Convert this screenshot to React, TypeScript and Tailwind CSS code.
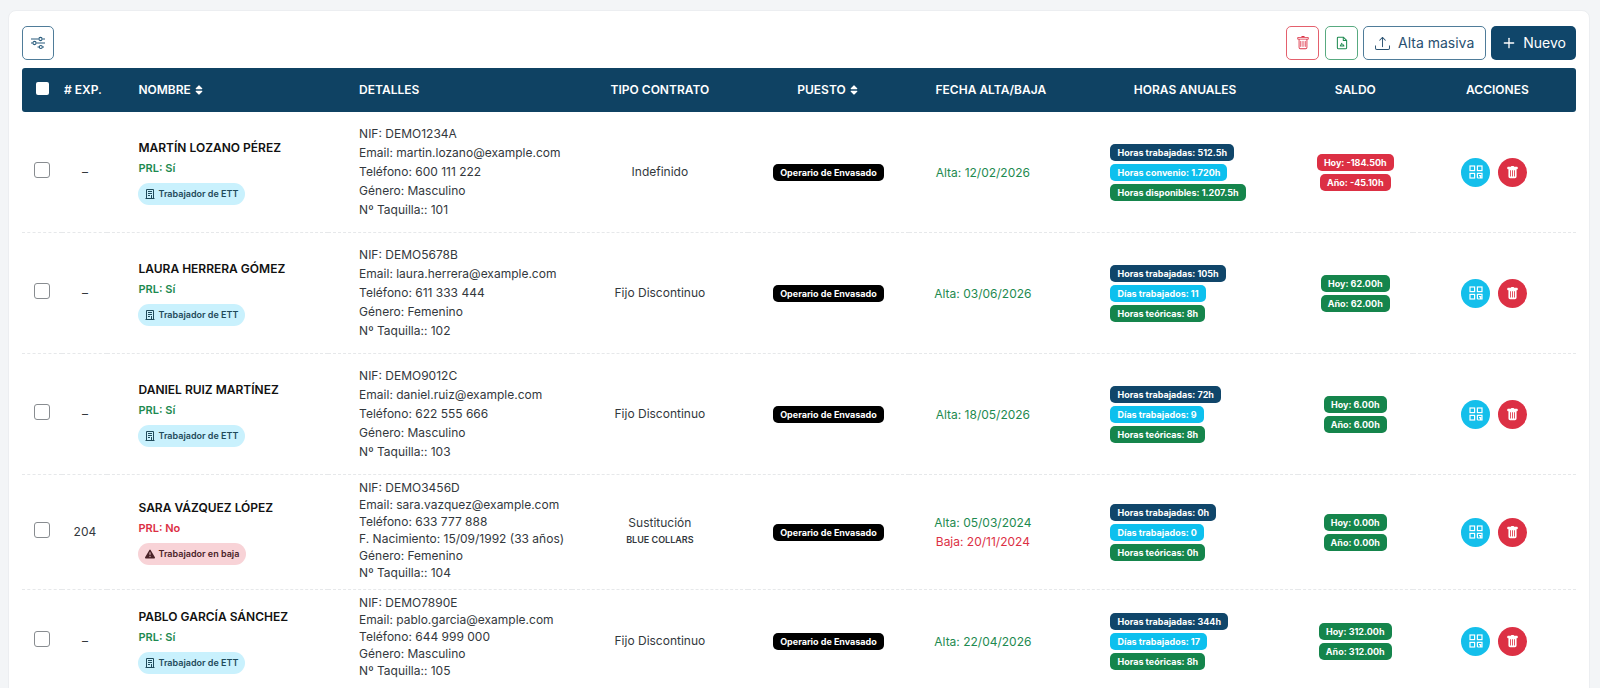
import { Plus } from 'lucide-react';
import { BsExclamationTriangleFill, BsTrash, BsTrashFill, BsUpload } from 'react-icons/bs';
import { FaSort } from 'react-icons/fa';

type Tone = 'navy' | 'cyan' | 'green' | 'red' | 'black';

interface Worker {
  exp: string;
  name: string;
  prl: boolean;
  status: 'ett' | 'baja';
  details: string[];
  contract: string;
  group?: string;
  alta: string;
  baja?: string;
  hours: string[];
  balance: string[];
  balanceTone: Tone;
  lineClass: string;
}

const tones: Record<Tone, string> = {
  navy: 'bg-[#10466a]',
  cyan: 'bg-[#0dc0ee]',
  green: 'bg-[#15854c]',
  red: 'bg-[#dc3044]',
  black: 'bg-black',
};

const hourTones: Tone[] = ['navy', 'cyan', 'green'];

const roomy = 'leading-[19px] pt-3 pb-[13px]';

const workers: Worker[] = [
  {
    exp: '–',
    name: 'MARTÍN LOZANO PÉREZ',
    prl: true,
    status: 'ett',
    details: ['NIF: DEMO1234A', 'Email: martin.lozano@example.com', 'Teléfono: 600 111 222', 'Género: Masculino', 'Nº Taquilla:: 101'],
    contract: 'Indefinido',
    alta: '12/02/2026',
    hours: ['Horas trabajadas: 512.5h', 'Horas convenio: 1.720h', 'Horas disponibles: 1.207.5h'],
    balance: ['Hoy: -184.50h', 'Año: -45.10h'],
    balanceTone: 'red',
    lineClass: roomy,
  },
  {
    exp: '–',
    name: 'LAURA HERRERA GÓMEZ',
    prl: true,
    status: 'ett',
    details: ['NIF: DEMO5678B', 'Email: laura.herrera@example.com', 'Teléfono: 611 333 444', 'Género: Femenino', 'Nº Taquilla:: 102'],
    contract: 'Fijo Discontinuo',
    alta: '03/06/2026',
    hours: ['Horas trabajadas: 105h', 'Días trabajados: 11', 'Horas teóricas: 8h'],
    balance: ['Hoy: 62.00h', 'Año: 62.00h'],
    balanceTone: 'green',
    lineClass: roomy,
  },
  {
    exp: '–',
    name: 'DANIEL RUIZ MARTÍNEZ',
    prl: true,
    status: 'ett',
    details: ['NIF: DEMO9012C', 'Email: daniel.ruiz@example.com', 'Teléfono: 622 555 666', 'Género: Masculino', 'Nº Taquilla:: 103'],
    contract: 'Fijo Discontinuo',
    alta: '18/05/2026',
    hours: ['Horas trabajadas: 72h', 'Días trabajados: 9', 'Horas teóricas: 8h'],
    balance: ['Hoy: 6.00h', 'Año: 6.00h'],
    balanceTone: 'green',
    lineClass: roomy,
  },
  {
    exp: '204',
    name: 'SARA VÁZQUEZ LÓPEZ',
    prl: false,
    status: 'baja',
    details: ['NIF: DEMO3456D', 'Email: sara.vazquez@example.com', 'Teléfono: 633 777 888', 'F. Nacimiento: 15/09/1992 (33 años)', 'Género: Femenino', 'Nº Taquilla:: 104'],
    contract: 'Sustitución',
    group: 'BLUE COLLARS',
    alta: '05/03/2024',
    baja: '20/11/2024',
    hours: ['Horas trabajadas: 0h', 'Días trabajados: 0', 'Horas teóricas: 0h'],
    balance: ['Hoy: 0.00h', 'Año: 0.00h'],
    balanceTone: 'green',
    lineClass: 'leading-[17px] pt-1 pb-2',
  },
  {
    exp: '–',
    name: 'PABLO GARCÍA SÁNCHEZ',
    prl: true,
    status: 'ett',
    details: ['NIF: DEMO7890E', 'Email: pablo.garcia@example.com', 'Teléfono: 644 999 000', 'Género: Masculino', 'Nº Taquilla:: 105'],
    contract: 'Fijo Discontinuo',
    alta: '22/04/2026',
    hours: ['Horas trabajadas: 344h', 'Días trabajados: 17', 'Horas teóricas: 8h'],
    balance: ['Hoy: 312.00h', 'Año: 312.00h'],
    balanceTone: 'green',
    lineClass: 'leading-[17px] pt-1 pb-[13px]',
  },
];

function SlidersIcon() {
  return (
    <svg viewBox="0 0 16 14" className="h-[14px] w-4" fill="none" stroke="currentColor" strokeWidth="1.1">
      <path d="M1 3h7.6M12.4 3H15M1 7h1.6M6.4 7H15M7.5 11h1.6M12.4 11H14" />
      <circle cx="10.5" cy="3" r="1.6" />
      <circle cx="4.5" cy="7" r="1.6" />
      <circle cx="10.8" cy="11" r="1.5" />
    </svg>
  );
}

function FileIcon() {
  return (
    <svg viewBox="0 0 14 16" className="h-[14px] w-3" fill="none" stroke="currentColor" strokeWidth="1.2" strokeLinejoin="round">
      <path d="M2.5 1.2h6L12.4 5v8.5a1.3 1.3 0 0 1-1.3 1.3H2.9a1.3 1.3 0 0 1-1.3-1.3V2.1a.9.9 0 0 1 .9-.9Z" />
      <path d="M8.5 1.2V5h3.9" />
      <path d="M7 8 5 11.4h4.2L7.6 9.2" />
    </svg>
  );
}

function BuildingIcon() {
  return (
    <svg viewBox="0 0 10 11" className="h-[11px] w-[10px]" fill="none" stroke="currentColor" strokeWidth="1">
      <path d="M1.5 10V1.5h7V10M.5 10.5h9" />
      <path d="M3 3.5h4M3 5.5h4M3 7.5h2M6.5 7v3" />
    </svg>
  );
}

function QrIcon() {
  return (
    <svg viewBox="0 0 14 14" className="size-[14px]" fill="none" stroke="currentColor" strokeWidth="1.2">
      <rect x="1" y="1" width="4.6" height="4.6" />
      <rect x="8.4" y="1" width="4.6" height="4.6" />
      <rect x="1" y="8.4" width="4.6" height="4.6" />
      <path d="M8.4 13V8.4H13V13H8.4M10 10.6h1.6V13" />
    </svg>
  );
}

function Badge({ tone, children }: { tone: Tone; children: string }) {
  return (
    <span className={`inline-block rounded-[5px] px-[7px] text-[9px] leading-[17px] font-bold whitespace-nowrap text-white ${tones[tone]}`}>
      {children}
    </span>
  );
}

function StatusPill({ status }: { status: Worker['status'] }) {
  const ett = status === 'ett';
  return (
    <div className={`flex w-fit items-center gap-[3px] rounded-full px-[7px] text-[9px] leading-[22px] font-semibold ${ett ? 'bg-[#c9f1fd] text-[#1f4a5a]' : 'bg-[#f8d3d7] text-[#4a2328]'}`}>
      {ett ? <BuildingIcon /> : <BsExclamationTriangleFill className="size-[10px]" />}
      {ett ? 'Trabajador de ETT' : 'Trabajador en baja'}
    </div>
  );
}

function WorkerRow({ worker }: { worker: Worker }) {
  return (
    <tr className="border-b border-dashed border-[#e6e8ea]">
      <td className="pb-1 text-center">
        <input type="checkbox" aria-label={`Seleccionar ${worker.name}`} className="size-4 appearance-none rounded-[3px] border border-[#888c90] bg-white align-middle" />
      </td>
      <td className="text-center">{worker.exp}</td>
      <td className="pb-0.5 pl-[31px]">
        <div className="leading-5 font-semibold text-[#111]">{worker.name}</div>
        <div className={`mb-[5px] text-[11px] leading-5 font-semibold ${worker.prl ? 'text-[#1e8a50]' : 'text-[#dc3044]'}`}>
          PRL: {worker.prl ? 'Sí' : 'No'}
        </div>
        <StatusPill status={worker.status} />
      </td>
      <td className={`pl-[31px] whitespace-nowrap ${worker.lineClass}`}>
        {worker.details.map((line) => (
          <div key={line}>{line}</div>
        ))}
      </td>
      <td className="text-center">
        {worker.contract}
        {worker.group && <div className="text-[9px] leading-[18px] font-semibold">{worker.group}</div>}
      </td>
      <td className="text-center">
        <Badge tone="black">Operario de Envasado</Badge>
      </td>
      <td className="pr-4 text-center leading-[19px]">
        <div className="text-[#1e8a50]">Alta: {worker.alta}</div>
        {worker.baja && <div className="text-[#dc3044]">Baja: {worker.baja}</div>}
      </td>
      <td className="pl-[38px]">
        <div className="flex flex-col items-start gap-[3px]">
          {worker.hours.map((label, i) => (
            <Badge key={label} tone={hourTones[i]}>{label}</Badge>
          ))}
        </div>
      </td>
      <td>
        <div className="flex flex-col items-center gap-[3px]">
          {worker.balance.map((label) => (
            <Badge key={label} tone={worker.balanceTone}>{label}</Badge>
          ))}
        </div>
      </td>
      <td>
        <div className="flex justify-center gap-2">
          <button type="button" aria-label="Código QR" className="flex size-[29px] items-center justify-center rounded-full bg-[#14bfeb] text-white">
            <QrIcon />
          </button>
          <button type="button" aria-label="Eliminar" className="flex size-[29px] items-center justify-center rounded-full bg-[#dc3044] text-white">
            <BsTrashFill className="size-[13px]" />
          </button>
        </div>
      </td>
    </tr>
  );
}

export default function App() {
  return (
    <main className="min-h-screen bg-[#f3f5f7] px-2 pt-[10px] font-['Inter','Liberation_Sans',sans-serif] text-xs text-[#33383d]">
      <section className="mr-[2px] min-h-screen rounded-t-lg border border-[#eceef1] bg-white px-[13px] pt-[15px]">
        <div className="mb-2 flex items-center justify-between">
          <button type="button" aria-label="Filtros" className="flex h-[34px] w-8 items-center justify-center rounded-[5px] border border-[#4f7c99] text-[#285b7c]">
            <SlidersIcon />
          </button>
          <div className="flex items-center gap-[5px] text-sm">
            <div className="flex gap-1.5">
              <button type="button" aria-label="Eliminar seleccionados" className="flex h-[34px] w-[33px] items-center justify-center rounded-[5px] border border-[#e4606d] text-[#dc3044]">
                <BsTrash className="size-[14px]" />
              </button>
              <button type="button" aria-label="Exportar archivo" className="flex h-[34px] w-[33px] items-center justify-center rounded-[5px] border border-[#58aa80] text-[#1e8a50]">
                <FileIcon />
              </button>
            </div>
            <button type="button" className="flex h-[34px] items-center gap-2 rounded-[5px] border border-[#4f7c99] px-[11px] text-[#285070]">
              <BsUpload className="size-[15px]" />
              Alta masiva
            </button>
            <button type="button" className="flex h-[34px] items-center gap-1.5 rounded-[5px] bg-[#10466a] px-2.5 text-white">
              <Plus className="size-4" />
              Nuevo
            </button>
          </div>
        </div>

        <table className="w-full table-fixed">
          <colgroup>
            <col className="w-[2.6%]" />
            <col className="w-[2.9%]" />
            <col className="w-[14.2%]" />
            <col className="w-[15.7%]" />
            <col className="w-[11.3%]" />
            <col className="w-[10.4%]" />
            <col className="w-[10.5%]" />
            <col className="w-[14.5%]" />
            <col className="w-[7.4%]" />
            <col className="w-[10.5%]" />
          </colgroup>
          <thead>
            <tr className="h-11 bg-[#0f4263] text-center whitespace-nowrap text-white [&>th]:font-semibold">
              <th className="rounded-l-[3px] pb-1">
                <input type="checkbox" aria-label="Seleccionar todos" className="size-[13px] appearance-none rounded-[2px] bg-white align-middle" />
              </th>
              <th className="pr-1"># EXP.</th>
              <th className="pl-[31px] text-left">
                <button type="button" className="inline-flex items-center gap-0.5">
                  NOMBRE <FaSort />
                </button>
              </th>
              <th className="pl-[31px] text-left">DETALLES</th>
              <th>TIPO CONTRATO</th>
              <th>
                <button type="button" className="inline-flex items-center gap-0.5">
                  PUESTO <FaSort />
                </button>
              </th>
              <th>FECHA ALTA/BAJA</th>
              <th>HORAS ANUALES</th>
              <th>SALDO</th>
              <th className="rounded-r-[3px] pl-1.5">ACCIONES</th>
            </tr>
          </thead>
          <tbody>
            {workers.map((worker) => (
              <WorkerRow key={worker.name} worker={worker} />
            ))}
          </tbody>
        </table>
      </section>
    </main>
  );
}
